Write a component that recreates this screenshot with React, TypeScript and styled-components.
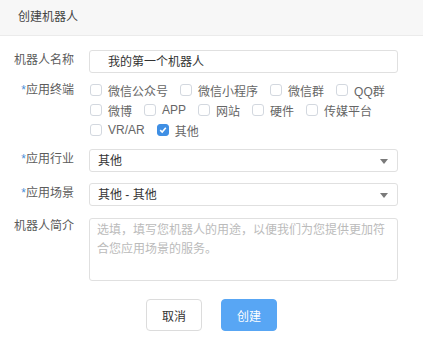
import styled, { createGlobalStyle } from "styled-components";

const GlobalStyle = createGlobalStyle`
  html, body {
    margin: 0;
    padding: 0;
    background: #ffffff;
  }
  body {
    font-family: "Liberation Sans", "Noto Sans CJK SC", sans-serif;
    font-size: 12px;
    color: #333;
  }
`;

const terminals = [
  { name: "微信公众号", checked: false },
  { name: "微信小程序", checked: false },
  { name: "微信群", checked: false },
  { name: "QQ群", checked: false },
  { name: "微博", checked: false },
  { name: "APP", checked: false },
  { name: "网站", checked: false },
  { name: "硬件", checked: false },
  { name: "传媒平台", checked: false },
  { name: "VR/AR", checked: false },
  { name: "其他", checked: true },
];

const App = () => {
  return (
    <Dialog>
      <GlobalStyle />
      <Header>创建机器人</Header>

      <Form>
        <Row $mb={7}>
          <Label>机器人名称</Label>
          <Field $indent={18}>我的第一个机器人</Field>
        </Row>

        <Row $mb={9}>
          <Label>
            <Star>*</Star>应用终端
          </Label>
          <CheckGroup>
            {terminals.map((t) => (
              <CheckItem key={t.name}>
                <Box $checked={t.checked}>
                  {t.checked && (
                    <svg width="8" height="8" viewBox="0 0 8 8">
                      <path
                        d="M1.2 4.2 L3.2 6 L6.8 1.8"
                        fill="none"
                        stroke="#fff"
                        strokeWidth="1.6"
                      />
                    </svg>
                  )}
                </Box>
                {t.name}
              </CheckItem>
            ))}
          </CheckGroup>
        </Row>

        <Row $mb={11}>
          <Label>
            <Star>*</Star>应用行业
          </Label>
          <Select>其他</Select>
        </Row>

        <Row $mb={12}>
          <Label>
            <Star>*</Star>应用场景
          </Label>
          <Select>其他 - 其他</Select>
        </Row>

        <Row $mb={0}>
          <Label $lh={17}>机器人简介</Label>
          <TextArea placeholder="选填，填写您机器人的用途，以便我们为您提供更加符合您应用场景的服务。" />
        </Row>
      </Form>

      <Footer>
        <Button>取消</Button>
        <Button $primary>创建</Button>
      </Footer>
    </Dialog>
  );
};

export default App;

const Dialog = styled.div`
  width: 423px;
  height: 346px;
  background: #fff;
  box-sizing: border-box;
`;

const Header = styled.div`
  height: 35px;
  line-height: 35px;
  padding-left: 18px;
  background: #f7f7f7;
  border-bottom: 1px solid #ebebeb;
  color: #444;
  font-size: 12px;
`;

const Form = styled.div`
  padding: 14px 25px 0 14px;
`;

const Row = styled.div<{ $mb: number }>`
  display: grid;
  grid-template-columns: 60px 1fr;
  column-gap: 15px;
  align-items: start;
  margin-bottom: ${(p) => p.$mb}px;
`;

const Label = styled.div<{ $lh?: number }>`
  text-align: right;
  line-height: ${(p) => p.$lh ?? 20}px;
  color: #5c5c5c;
  white-space: nowrap;
`;

const Star = styled.span`
  color: #4a8fd8;
`;

const Field = styled.div<{ $indent?: number }>`
  height: 23px;
  line-height: 23px;
  box-sizing: border-box;
  border: 1px solid #e0e0e0;
  border-radius: 3px;
  padding-left: ${(p) => p.$indent ?? 8}px;
  color: #333;
`;

const Select = styled(Field)`
  position: relative;

  &::after {
    content: "";
    position: absolute;
    right: 9px;
    top: 9px;
    border-left: 4px solid transparent;
    border-right: 4px solid transparent;
    border-top: 5px solid #7a7a7a;
  }
`;

const CheckGroup = styled.div`
  display: flex;
  flex-wrap: wrap;
  padding-left: 1px;
`;

const CheckItem = styled.label`
  display: flex;
  align-items: center;
  height: 20px;
  margin-right: 12px;
  color: #666;
  white-space: nowrap;
`;

const Box = styled.span<{ $checked: boolean }>`
  display: inline-flex;
  align-items: center;
  justify-content: center;
  width: 12px;
  height: 12px;
  box-sizing: border-box;
  margin-right: 6px;
  border-radius: 3px;
  border: 1px solid ${(p) => (p.$checked ? "#3f8fe4" : "#d3d8df")};
  background: ${(p) => (p.$checked ? "#3f8fe4" : "#fff")};
`;

const TextArea = styled.textarea`
  height: 63px;
  box-sizing: border-box;
  border: 1px solid #e0e0e0;
  border-radius: 3px;
  padding: 2px 7px;
  resize: none;
  font-family: inherit;
  font-size: 12px;
  line-height: 19px;
  color: #333;
  outline: none;

  &::placeholder {
    color: #bbbbbb;
  }
`;

const Footer = styled.div`
  display: flex;
  justify-content: center;
  gap: 19px;
  margin-top: 18px;
`;

const Button = styled.button<{ $primary?: boolean }>`
  width: 56px;
  height: 32px;
  box-sizing: border-box;
  border-radius: 4px;
  font-family: inherit;
  font-size: 12px;
  cursor: pointer;
  border: 1px solid ${(p) => (p.$primary ? "#58a6f4" : "#dcdcdc")};
  background: ${(p) => (p.$primary ? "#58a6f4" : "#fff")};
  color: ${(p) => (p.$primary ? "#fff" : "#333")};
`;
